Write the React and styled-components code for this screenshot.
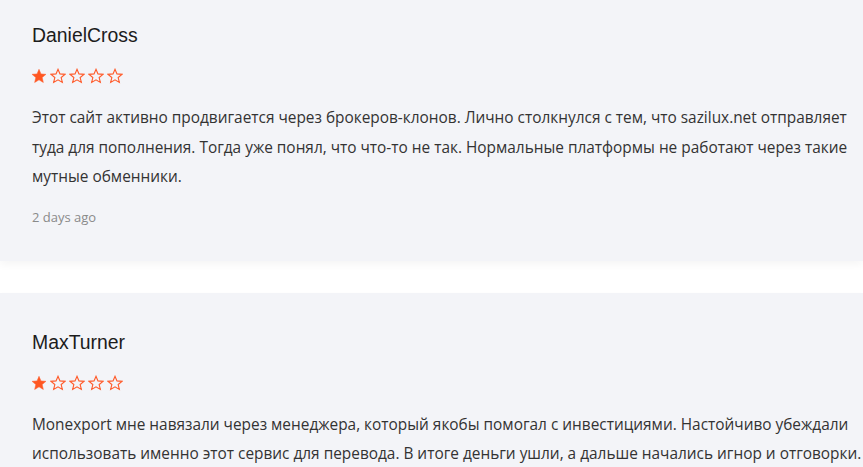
import styled, { createGlobalStyle } from 'styled-components';

const GlobalStyle = createGlobalStyle`
  html, body {
    margin: 0;
    padding: 0;
    background: #fff;
    overflow: hidden;
  }
`;

const reviews = [
  {
    name: 'DanielCross',
    rating: 1,
    text: 'Этот сайт активно продвигается через брокеров-клонов. Лично столкнулся с тем, что sazilux.net отправляет туда для пополнения. Тогда уже понял, что что-то не так. Нормальные платформы не работают через такие мутные обменники.',
    date: '2 days ago',
  },
  {
    name: 'MaxTurner',
    rating: 1,
    text: 'Monexport мне навязали через менеджера, который якобы помогал с инвестициями. Настойчиво убеждали использовать именно этот сервис для перевода. В итоге деньги ушли, а дальше начались игнор и отговорки.',
    date: '3 days ago',
  },
];

const Star = ({ filled }) => (
  <svg width="16" height="16" viewBox="0 0 24 24">
    <path
      d="M12 2l2.95 6.9 7.45.6-5.65 4.85 1.75 7.3L12 17.75 5.5 21.65l1.75-7.3L1.6 9.5l7.45-.6z"
      fill={filled ? '#ff5722' : 'none'}
      stroke="#ff5a2a"
      strokeWidth={filled ? 0.8 : 1.7}
      strokeLinejoin="miter"
    />
  </svg>
);

const App = () => {
  return (
    <>
      <GlobalStyle />
      <List>
        {reviews.map((r) => (
          <Card key={r.name}>
            <Name>{r.name}</Name>
            <Stars>
              {[1, 2, 3, 4, 5].map((i) => (
                <Star key={i} filled={i <= r.rating} />
              ))}
            </Stars>
            <Body>{r.text}</Body>
            <Date>{r.date}</Date>
          </Card>
        ))}
      </List>
    </>
  );
};

const List = styled.div`
  display: flex;
  flex-direction: column;
  gap: 32px;
  margin-top: -14px;
`;

const Card = styled.div`
  background: #f3f4f8;
  padding: 36px 0 35px 32px;
  box-shadow: 0 4px 8px rgba(0, 0, 0, 0.04);
`;

const Name = styled.div`
  font-family: 'Liberation Sans', Arial, sans-serif;
  font-size: 19.4px;
  line-height: 26px;
  color: #1c1c1c;
`;

const Stars = styled.div`
  display: flex;
  gap: 3px;
  margin-top: 20px;
  margin-left: -1px;
`;

const Body = styled.p`
  margin: 19px 0 0;
  font-family: 'Open Sans', sans-serif;
  font-size: 15.4px;
  line-height: 29.5px;
  color: #333;
`;

const Date = styled.div`
  margin-top: 16px;
  font-family: 'Open Sans', sans-serif;
  font-size: 13px;
  color: #8a8a8a;
`;

export default App;
